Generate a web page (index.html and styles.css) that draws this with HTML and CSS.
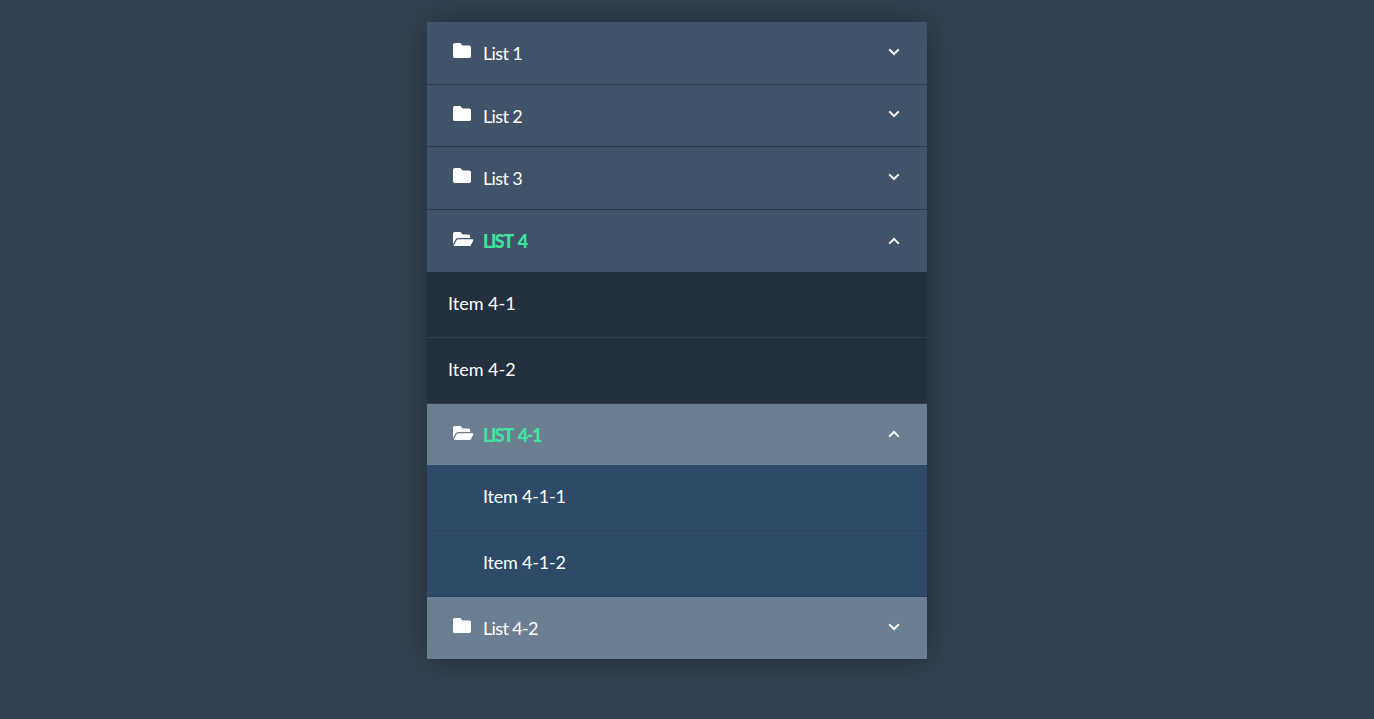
FILE: index.html
```html
<!DOCTYPE html>
<html lang="en">
<head>
<meta charset="utf-8">
<title>Accordion menu</title>
<link rel="stylesheet" href="styles.css">
</head>
<body>
<svg class="defs" width="0" height="0" aria-hidden="true">
  <symbol id="folder" viewBox="0 64 512 384" preserveAspectRatio="none"><path d="M464 128H272l-64-64H48C21.49 64 0 85.49 0 112v288c0 26.51 21.49 48 48 48h416c26.51 0 48-21.49 48-48V176c0-26.51-21.49-48-48-48z"/></symbol>
  <symbol id="folder-open" viewBox="0 64 576 384" preserveAspectRatio="none"><path d="M572.694 292.093L500.27 416.248A63.997 63.997 0 0 1 444.989 448H45.025c-18.523 0-30.064-20.093-20.731-36.093l72.424-124.155A64 64 0 0 1 152 256h399.964c18.523 0 30.064 20.093 20.73 36.093zM152 224h328v-48c0-26.51-21.49-48-48-48H272l-64-64H48C21.49 64 0 85.49 0 112v278.046l69.077-118.418C86.214 242.25 117.989 224 152 224z"/></symbol>
  <symbol id="down" viewBox="0 0 12 8"><path d="M1.2 1.4 6 6 10.8 1.4" fill="none" stroke="currentColor" stroke-width="2"/></symbol>
  <symbol id="up" viewBox="0 0 12 8"><path d="M1.2 6.6 6 2 10.8 6.6" fill="none" stroke="currentColor" stroke-width="2"/></symbol>
</svg>
<main class="accordion">
  <div class="head"><svg class="folder"><use href="#folder"/></svg><span class="label">List 1</span><svg class="chev"><use href="#down"/></svg></div>
  <div class="head"><svg class="folder"><use href="#folder"/></svg><span class="label">List 2</span><svg class="chev"><use href="#down"/></svg></div>
  <div class="head"><svg class="folder"><use href="#folder"/></svg><span class="label">List 3</span><svg class="chev"><use href="#down"/></svg></div>
  <div class="head open"><svg class="folder"><use href="#folder-open"/></svg><span class="label">LIST 4</span><svg class="chev"><use href="#up"/></svg></div>
  <div class="item">Item 4-1</div>
  <div class="item">Item 4-2</div>
  <div class="head sub open"><svg class="folder"><use href="#folder-open"/></svg><span class="label">LIST 4-1</span><svg class="chev"><use href="#up"/></svg></div>
  <div class="item deep">Item 4-1-1</div>
  <div class="item deep">Item 4-1-2</div>
  <div class="head sub"><svg class="folder"><use href="#folder"/></svg><span class="label">List 4-2</span><svg class="chev"><use href="#down"/></svg></div>
</main>
</body>
</html>
```
FILE: styles.css
```css
* { box-sizing: border-box; }
html, body { height: 100%; }
body {
  margin: 0;
  padding: 22px 20px 0 0;
  background: #334251;
  color: #fff;
  font-family: "Lato", sans-serif;
  overflow: hidden;
}
.defs { display: block; height: 0; }
.accordion {
  width: 500px;
  margin: 0 auto;
  box-shadow: 0 0 30px rgba(0, 0, 0, .35);
}
.head {
  display: flex;
  align-items: center;
  height: 62.5px;
  padding: .5px 27px 0 26px;
  background: #415368;
  border-bottom: 1px solid #2b3848;
  font-size: 18px;
  letter-spacing: -.65px;
}
.head.open { border-bottom: 0; }
.head.sub { background: #6c7e92; }
.head.sub.open { height: 61px; }
.head.sub:last-child { height: 62px; border-bottom: 0; }
.folder { width: 18px; height: 15px; margin-top: -5px; fill: #fff; flex: none; }
.head.open .folder { width: 20.5px; height: 14.5px; margin-top: -4px; }
.label { margin-left: 12px; flex: 1; }
.head.open .label { margin-left: 9.5px; }
.open .label {
  color: #40e4a0;
  font-weight: 900;
  letter-spacing: -1.5px;
  word-spacing: 3px;
}
.chev { width: 12px; height: 8px; margin-top: -3px; color: #fff; flex: none; }
.head.open .chev { margin-top: -1px; }
.item {
  height: 66px;
  padding: 0 21px 4px;
  display: flex;
  align-items: center;
  background: #23303e;
  border-bottom: 1px solid #33404e;
  font-size: 18px;
}
.deep {
  padding-left: 56px;
  background: #2e4a68;
  border-bottom-color: #2b435d;
  letter-spacing: -.2px;
}
```
